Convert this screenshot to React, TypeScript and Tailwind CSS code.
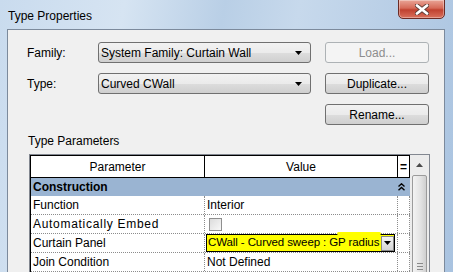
import React from "react";

const font = { fontFamily: '"Liberation Sans", Arial, sans-serif' };

function ComboArrow() {
  return (
    <svg width="7" height="4" viewBox="0 0 7 4" className="shrink-0">
      <path d="M0 0h7L3.5 4z" fill="#000" />
    </svg>
  );
}

function Combo({ value }: { value: string }) {
  return (
    <div className="flex h-[21px] w-[213px] items-center justify-between rounded-[3px] border border-[#707070] bg-[linear-gradient(#f2f2f2,#ebebeb_50%,#dddddd_51%,#cfcfcf)] pl-[2px] pr-[8px] text-[12px] text-black">
      <span>{value}</span>
      <ComboArrow />
    </div>
  );
}

function Button({ label, disabled }: { label: string; disabled?: boolean }) {
  return (
    <div
      className={
        disabled
          ? "flex h-[21px] w-[104px] items-center justify-center rounded-[3px] border border-[#adb2b5] bg-[#f4f4f4] text-[12px] text-[#8d8d8d]"
          : "flex h-[21px] w-[104px] items-center justify-center rounded-[3px] border border-[#707070] bg-[linear-gradient(#f2f2f2,#ebebeb_50%,#dddddd_51%,#cfcfcf)] text-[12px] text-black"
      }
    >
      {label}
    </div>
  );
}

const rows = [
  { name: "Function", value: "Interior" },
  { name: "Automatically Embed", value: "checkbox" },
  { name: "Curtain Panel", value: "panel" },
  { name: "Join Condition", value: "Not Defined" },
];

function ValueCell({ value }: { value: string }) {
  if (value === "checkbox") {
    return (
      <div className="flex h-full items-center pl-[4px]">
        <div className="h-[13px] w-[13px] border border-[#8f8f8f] bg-[linear-gradient(135deg,#dcdcdc,#f8f8f8)]" />
      </div>
    );
  }
  if (value === "panel") {
    return (
      <div className="relative flex h-full items-center">
        <div className="absolute left-[132px] top-[-2px] h-[3px] w-[44px] rounded-full bg-[#ffff00]" />
        <div className="ml-[1px] flex h-[18px] w-[189px] items-center justify-between border border-black bg-[#ffff00] pl-[1px]">
          <span className="whitespace-nowrap text-[11.5px] tracking-[-0.1px]">CWall - Curved sweep : GP radius</span>
          <div className="flex h-[15px] w-[13px] shrink-0 items-center justify-center border border-[#8a8a8a] bg-[linear-gradient(#f4f4f4,#d4d4d4)]">
            <ComboArrow />
          </div>
        </div>
      </div>
    );
  }
  return <div className="flex h-full items-center pl-[2px]">{value}</div>;
}

export default function App() {
  return (
    <div
      className="relative h-[272px] w-[453px] overflow-hidden bg-[linear-gradient(100deg,#c9dbee_0%,#d6e4f2_25%,#b9cfe6_45%,#c7d9ec_60%,#a9c3e0_100%)]"
      style={font}
    >
      {/* title bar */}
      <div className="flex h-[29px] items-start justify-between pl-[8px] pr-[8px]">
        <span className="mt-[9px] text-[12px] leading-[14px] text-black">Type Properties</span>
        <div className="mt-[-1px] flex h-[20px] w-[47px] items-center justify-center rounded-b-[5px] border border-[#6b2b25] bg-[linear-gradient(#e9a597,#d66a58_45%,#c0412f_55%,#d9705c)] shadow-[inset_0_0_0_1px_rgba(255,255,255,0.35)]">
          <svg width="14" height="11" viewBox="0 0 14 11">
            <path d="M2 1.5l10 8M12 1.5l-10 8" stroke="#5a3a35" strokeWidth="4.4" strokeLinecap="round" />
            <path d="M2 1.5l10 8M12 1.5l-10 8" stroke="#fff" strokeWidth="2.8" strokeLinecap="round" />
          </svg>
        </div>
      </div>

      {/* client area */}
      <div className="ml-[7px] h-[260px] w-[438px] border border-[#7c8a9c] bg-[#f0f0f0] text-[12px] text-black">
        <div className="grid grid-cols-[71px_227px_104px] gap-y-[10px] pl-[19px] pt-[12px]">
          <div className="flex items-center">Family:</div>
          <Combo value="System Family: Curtain Wall" />
          <Button label="Load..." disabled />
          <div className="flex items-center">Type:</div>
          <Combo value="Curved CWall" />
          <Button label="Duplicate..." />
          <div />
          <div />
          <Button label="Rename..." />
        </div>

        <div className="mt-[9px] pl-[20px] leading-[14px]">Type Parameters</div>

        <div className="ml-[21px] mt-[6px] flex w-[401px] border border-[#828790] bg-white">
          {/* grid */}
          <div className="w-[381px] border-l border-t border-black">
            <div className="flex h-[22px] border-b border-black">
              <div className="flex w-[174px] items-center justify-center border-r border-black">Parameter</div>
              <div className="flex w-[193px] items-center justify-center border-r border-black">Value</div>
              <div className="flex w-[12px] items-center justify-center border-r border-black font-bold">=</div>
            </div>
            <div className="flex h-[18px] items-center justify-between bg-[#9ab4d2] pl-[2px] pr-[5px] font-bold">
              <span>Construction</span>
              <svg width="7" height="8" viewBox="0 0 7 8">
                <path d="M0.5 3.5L3.5 0.8L6.5 3.5M0.5 7.2L3.5 4.5L6.5 7.2" stroke="#000" strokeWidth="1.4" fill="none" />
              </svg>
            </div>
            {rows.map((row) => (
              <div key={row.name} className="flex h-[19px] border-b border-dotted border-[#8c8c8c]">
                <div
                  className={
                    row.name === "Automatically Embed"
                      ? "flex w-[174px] items-center border-r border-dotted border-[#8c8c8c] pl-[2px] tracking-[0.7px]"
                      : "flex w-[174px] items-center border-r border-dotted border-[#8c8c8c] pl-[2px]"
                  }
                >
                  {row.name}
                </div>
                <div className="w-[193px] border-r border-dotted border-[#8c8c8c]">
                  <ValueCell value={row.value} />
                </div>
                <div className="w-[12px] border-r border-dotted border-[#8c8c8c]" />
              </div>
            ))}
          </div>

          {/* scrollbar */}
          <div className="flex w-[19px] flex-col items-center bg-[#ececec]">
            <div className="flex h-[20px] w-full items-center justify-center">
              <svg width="7" height="4" viewBox="0 0 7 4">
                <path d="M0 4h7L3.5 0z" fill="#4a4a4a" />
              </svg>
            </div>
            <div className="flex h-[110px] w-[15px] items-end justify-center rounded-[2px] border border-[#9b9b9b] bg-[linear-gradient(90deg,#f3f3f3,#e2e2e2_60%,#cfcfcf)] pb-[14px]">
              <div className="flex flex-col gap-[2px]">
                <div className="h-px w-[6px] bg-[#8a8a8a]" />
                <div className="h-px w-[6px] bg-[#8a8a8a]" />
                <div className="h-px w-[6px] bg-[#8a8a8a]" />
              </div>
            </div>
          </div>
        </div>
      </div>
    </div>
  );
}
